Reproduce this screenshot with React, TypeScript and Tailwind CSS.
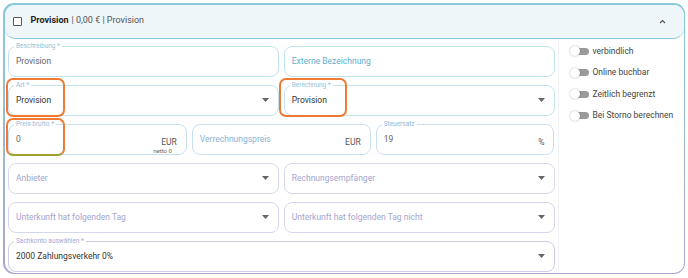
import React from "react";

const Caret = () => (
  <svg width="7" height="4" viewBox="0 0 7 4" className="shrink-0">
    <path d="M0 0 L7 0 L3.5 4 Z" fill="#666" />
  </svg>
);

type FProps = {
  label?: string;
  value?: string;
  valueColor?: string;
  placeholder?: string;
  border: string;
  labelColor?: string;
  phColor?: string;
  caret?: boolean;
  children?: React.ReactNode;
};

const Field = ({ label, value, valueColor, placeholder, border, labelColor, phColor, caret, children }: FProps) => (
  <div
    className="relative h-[31px] rounded-[8px] border bg-white flex items-center pl-[7px] pr-[9px]"
    style={{ borderColor: border }}
  >
    {label && (
      <span
        className="absolute -top-[6px] left-[5px] bg-white px-[2px] text-[6.5px] leading-[10px]"
        style={{ color: labelColor }}
      >
        {label}
      </span>
    )}
    <div className="flex-1 text-[8.5px] leading-none">
      {value ? (
        <span style={{ color: valueColor ?? "#333" }}>{value}</span>
      ) : (
        <span style={{ color: phColor }}>{placeholder}</span>
      )}
    </div>
    {caret && <Caret />}
    {children}
  </div>
);

const Switch = ({ label }: { label: string }) => (
  <div className="flex items-center h-[11px]">
    <div className="relative w-[20px] h-[10px] flex items-center">
      <div className="absolute left-[5px] w-[14px] h-[7px] rounded-full bg-[#9a9a9a]" />
      <div className="absolute left-0 w-[10px] h-[10px] rounded-full bg-white shadow-[0_0_2px_rgba(0,0,0,0.35)]" />
    </div>
    <span className="ml-[3px] text-[8.5px] text-[#444]">{label}</span>
  </div>
);

const Orange = ({ cls }: { cls: string }) => (
  <div className={`absolute rounded-[7px] border-[2.5px] border-[#f07a34] pointer-events-none ${cls}`} />
);

export default function App() {
  return (
    <div className="w-[688px] h-[278px] bg-white relative" style={{ fontFamily: "Roboto, 'Liberation Sans', sans-serif" }}>
      <div className="absolute left-[3px] top-[3px] w-[682px] h-[271px] rounded-[11px] p-[1.5px] bg-gradient-to-b from-[#86cad9] to-[#a8a8cf]">
        <div className="w-full h-full rounded-[10px] bg-white overflow-hidden flex flex-col">
          <div className="h-[34px] bg-[#eef6fa] border-b-[1.5px] border-[#86cad9] rounded-b-[10px] flex items-center pl-[8px] pr-[18px] shrink-0">
            <div className="w-[9px] h-[9px] border border-[#555] rounded-[1px] bg-white" />
            <span className="ml-[9px] text-[9px] font-bold text-[#222]">Provision</span>
            <span className="ml-[3px] text-[9px] text-[#555]">| 0,00 € | Provision</span>
            <div className="flex-1" />
            <svg width="7" height="5" viewBox="0 0 7 5">
              <path d="M1 4 L3.5 1.5 L6 4" stroke="#555" strokeWidth="1.2" fill="none" />
            </svg>
          </div>
          <div className="flex flex-1">
            <div className="w-[553px] pl-[3.5px] pt-[7px] flex flex-col gap-[8px] pr-[3px]">
              <div className="grid grid-cols-2 gap-[5px]">
                <Field label="Beschreibung *" value="Provision" valueColor="#666" border="#bfe3ec" labelColor="#8cc6d9" />
                <Field placeholder="Externe Bezeichnung" border="#bfe3ec" phColor="#62aecd" />
              </div>
              <div className="grid grid-cols-2 gap-[5px]">
                <Field label="Art *" value="Provision" border="#c2e2ec" labelColor="#8cc6d9" caret />
                <Field label="Berechnung *" value="Provision" border="#c2e2ec" labelColor="#8cc6d9" caret />
              </div>
              <div className="grid grid-cols-3 gap-[5px]">
                <Field label="Preis brutto *" value="0" valueColor="#666" border="#c6e0ee" labelColor="#8cc0dc">
                  <span className="text-[8.5px] text-[#555] mt-[7px]">EUR</span>
                  <span className="absolute right-[14px] bottom-[0px] text-[6px] text-[#666] leading-[7px]">netto 0</span>
                </Field>
                <Field placeholder="Verrechnungspreis" border="#cadff0" phColor="#86b3d6">
                  <span className="text-[8.5px] text-[#555] mt-[7px]">EUR</span>
                </Field>
                <Field label="Steuersatz" value="19" valueColor="#666" border="#cadff0" labelColor="#8cbad9">
                  <span className="text-[8.5px] text-[#555] mt-[7px]">%</span>
                </Field>
              </div>
              <div className="grid grid-cols-2 gap-[5px]">
                <Field placeholder="Anbieter" border="#d6d9ee" phColor="#a3a6cf" caret />
                <Field placeholder="Rechnungsempfänger" border="#d6d9ee" phColor="#a3a6cf" caret />
              </div>
              <div className="grid grid-cols-2 gap-[5px]">
                <Field placeholder="Unterkunft hat folgenden Tag" border="#d6d6ee" phColor="#a4a4d0" caret />
                <Field placeholder="Unterkunft hat folgenden Tag nicht" border="#d6d6ee" phColor="#a4a4d0" caret />
              </div>
              <Field label="Sachkonto auswählen *" value="2000 Zahlungsverkehr 0%" border="#cbcbe8" labelColor="#a8a8d0" caret />
            </div>
            <div className="flex-1 border-l border-[#f0f2f7] pl-[11px] pt-[7px] flex flex-col gap-[10.5px]">
              <Switch label="verbindlich" />
              <Switch label="Online buchbar" />
              <Switch label="Zeitlich begrenzt" />
              <Switch label="Bei Storno berechnen" />
            </div>
          </div>
        </div>
      </div>
      <Orange cls="left-[6px] top-[78px] w-[59px] h-[39px]" />
      <Orange cls="left-[279px] top-[78px] w-[68px] h-[39px]" />
      <div className="absolute left-[6px] top-[118px] w-[59px] h-[38px] rounded-[7px] border-[2.5px] border-[#f07a34] border-b-[#a0a030] pointer-events-none" />
    </div>
  );
}
